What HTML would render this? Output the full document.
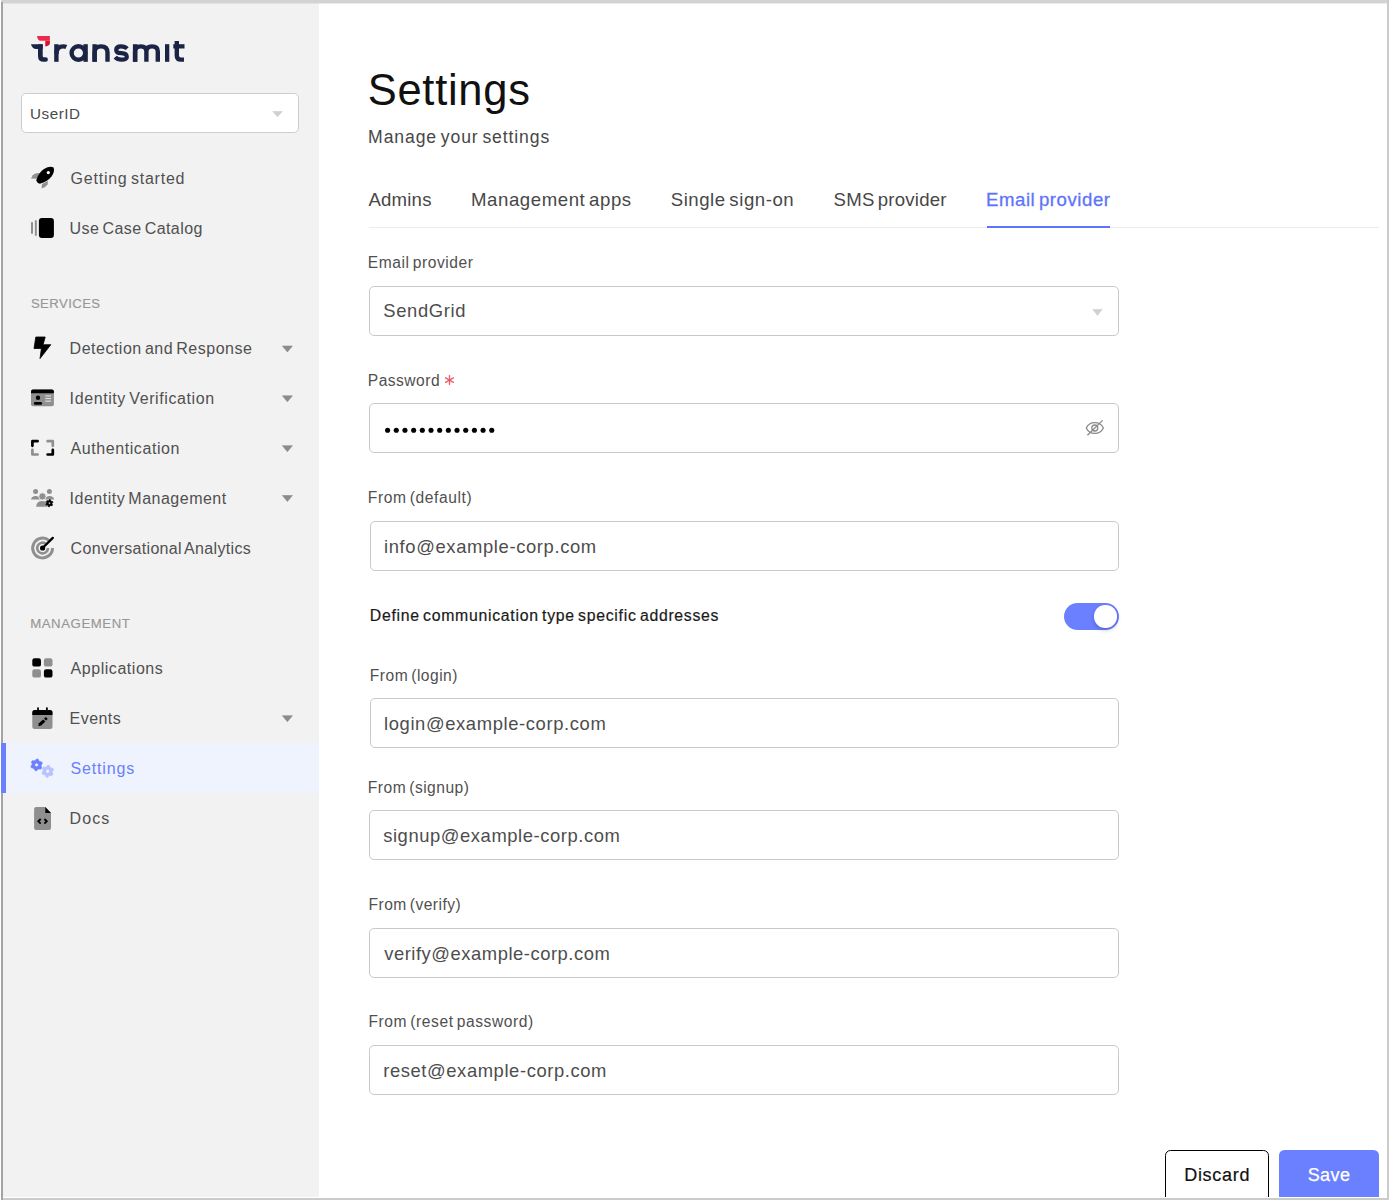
<!DOCTYPE html>
<html><head><meta charset="utf-8">
<style>
html,body{margin:0;padding:0;width:1391px;height:1204px;overflow:hidden;background:#fff;}
body{position:relative;font-family:"Liberation Sans",sans-serif;}
.t{position:absolute;white-space:nowrap;font-family:"Liberation Sans",sans-serif;}
.b{position:absolute;box-sizing:border-box;}
.fld{position:absolute;box-sizing:border-box;border:1px solid #c9c9c9;border-radius:5px;background:#fff;}
svg{position:absolute;left:0;top:0;overflow:visible;}
</style></head><body>
<!-- frame -->
<div class="b" style="left:3px;top:3px;width:316px;height:1194px;background:#f2f2f2"></div>
<div class="b" style="left:1px;top:0;width:1387px;height:3px;background:#d3d3d3"></div>
<div class="b" style="left:3px;top:3px;width:1384px;height:1px;background:rgba(200,200,200,0.35)"></div>
<div class="b" style="left:1px;top:2px;width:2px;height:1198px;background:#a4a4a4"></div>
<div class="b" style="left:1387px;top:0;width:2px;height:1200px;background:#cbcbcb"></div>
<div class="b" style="left:3px;top:1198px;width:1384px;height:2px;background:#cbcbcb"></div>
<!-- active nav -->
<div class="b" style="left:3px;top:743px;width:316px;height:50px;background:#eff3fd"></div>
<div class="b" style="left:1px;top:743px;width:5px;height:50px;background:#6b80ff"></div>
<!-- userid select -->
<div class="fld" style="left:21px;top:93px;width:278px;height:40px;border-color:#cdcdcd;border-radius:5px"></div>
<!-- tabs -->
<div class="b" style="left:369px;top:227px;width:1010px;height:1px;background:#ececec"></div>
<div class="b" style="left:987px;top:226px;width:123px;height:2px;background:#5b73ff"></div>
<!-- fields -->
<div class="fld" style="left:369px;top:286px;width:750px;height:50px"></div>
<div class="fld" style="left:369px;top:403px;width:750px;height:50px"></div>
<div class="fld" style="left:370px;top:521px;width:749px;height:50px"></div>
<div class="fld" style="left:370px;top:698px;width:749px;height:50px"></div>
<div class="fld" style="left:369px;top:810px;width:750px;height:50px"></div>
<div class="fld" style="left:369px;top:928px;width:750px;height:50px"></div>
<div class="fld" style="left:369px;top:1045px;width:750px;height:50px"></div>
<!-- toggle -->
<div class="b" style="left:1064px;top:603px;width:55px;height:27px;border-radius:14px;background:#6b80ff"></div>
<div class="b" style="left:1094px;top:605px;width:22.5px;height:22.5px;border-radius:50%;background:#fff;box-shadow:0 2px 4px rgba(0,0,40,0.22)"></div>
<!-- buttons -->
<div class="b" style="left:1165px;top:1150px;width:104px;height:60px;border:1.5px solid #000;border-radius:5.5px;background:#fff"></div>
<div class="b" style="left:1279px;top:1150px;width:100px;height:60px;border-radius:5.5px;background:#6a80ff"></div>
<!-- cover below bottom border -->
<div class="b" style="left:0;top:1200px;width:1391px;height:4px;background:#fff"></div>
<div class="b" style="left:3px;top:1198px;width:1384px;height:2px;background:#cbcbcb"></div>
<div class="b" style="left:3px;top:1197px;width:1384px;height:1px;background:#fff"></div>
<div class="t" style="left:30.10px;top:106.13px;font-size:15.20px;line-height:15.20px;letter-spacing:0.523px;word-spacing:0.00px;color:#4a4a4a;font-weight:400;">UserID</div>
<div class="t" style="left:70.60px;top:171.46px;font-size:16.00px;line-height:16.00px;letter-spacing:0.765px;word-spacing:-1.76px;color:#505050;font-weight:400;">Getting started</div>
<div class="t" style="left:69.60px;top:221.46px;font-size:16.00px;line-height:16.00px;letter-spacing:0.432px;word-spacing:-1.76px;color:#505050;font-weight:400;">Use Case Catalog</div>
<div class="t" style="left:69.60px;top:341.46px;font-size:16.00px;line-height:16.00px;letter-spacing:0.504px;word-spacing:-1.76px;color:#505050;font-weight:400;">Detection and Response</div>
<div class="t" style="left:69.60px;top:391.46px;font-size:16.00px;line-height:16.00px;letter-spacing:0.598px;word-spacing:-1.76px;color:#505050;font-weight:400;">Identity Verification</div>
<div class="t" style="left:70.60px;top:441.46px;font-size:16.00px;line-height:16.00px;letter-spacing:0.569px;word-spacing:0.00px;color:#505050;font-weight:400;">Authentication</div>
<div class="t" style="left:69.60px;top:491.46px;font-size:16.00px;line-height:16.00px;letter-spacing:0.496px;word-spacing:-1.76px;color:#505050;font-weight:400;">Identity Management</div>
<div class="t" style="left:70.60px;top:541.46px;font-size:16.00px;line-height:16.00px;letter-spacing:0.332px;word-spacing:-1.76px;color:#505050;font-weight:400;">Conversational Analytics</div>
<div class="t" style="left:70.60px;top:661.46px;font-size:16.00px;line-height:16.00px;letter-spacing:0.539px;word-spacing:0.00px;color:#505050;font-weight:400;">Applications</div>
<div class="t" style="left:69.60px;top:711.46px;font-size:16.00px;line-height:16.00px;letter-spacing:0.438px;word-spacing:0.00px;color:#505050;font-weight:400;">Events</div>
<div class="t" style="left:69.60px;top:811.46px;font-size:16.00px;line-height:16.00px;letter-spacing:1.084px;word-spacing:0.00px;color:#505050;font-weight:400;">Docs</div>
<div class="t" style="left:70.60px;top:761.46px;font-size:16.00px;line-height:16.00px;letter-spacing:0.827px;word-spacing:0.00px;color:#6a7ffb;font-weight:400;">Settings</div>
<div class="t" style="left:30.90px;top:296.83px;font-size:13.20px;line-height:13.20px;letter-spacing:0.398px;word-spacing:0.00px;color:#979797;font-weight:400;-webkit-text-stroke:0.15px #979797">SERVICES</div>
<div class="t" style="left:30.20px;top:616.83px;font-size:13.20px;line-height:13.20px;letter-spacing:0.566px;word-spacing:0.00px;color:#979797;font-weight:400;-webkit-text-stroke:0.15px #979797">MANAGEMENT</div>
<div class="t" style="left:367.70px;top:69.18px;font-size:43.50px;line-height:43.50px;letter-spacing:0.719px;word-spacing:0.00px;color:#111;font-weight:400;">Settings</div>
<div class="t" style="left:368.10px;top:129.10px;font-size:17.60px;line-height:17.60px;letter-spacing:0.884px;word-spacing:-1.94px;color:#474747;font-weight:400;">Manage your settings</div>
<div class="t" style="left:368.40px;top:191.26px;font-size:18.60px;line-height:18.60px;letter-spacing:0.214px;word-spacing:0.00px;color:#474747;font-weight:400;">Admins</div>
<div class="t" style="left:471.00px;top:191.26px;font-size:18.60px;line-height:18.60px;letter-spacing:0.584px;word-spacing:-2.05px;color:#474747;font-weight:400;">Management apps</div>
<div class="t" style="left:670.70px;top:191.26px;font-size:18.60px;line-height:18.60px;letter-spacing:0.552px;word-spacing:-2.05px;color:#474747;font-weight:400;">Single sign-on</div>
<div class="t" style="left:833.60px;top:191.26px;font-size:18.60px;line-height:18.60px;letter-spacing:0.206px;word-spacing:-2.05px;color:#474747;font-weight:400;">SMS provider</div>
<div class="t" style="left:986.00px;top:191.26px;font-size:18.60px;line-height:18.60px;letter-spacing:0.559px;word-spacing:-2.05px;color:#5d74fb;font-weight:400;-webkit-text-stroke:0.3px #5d74fb">Email provider</div>
<div class="t" style="left:367.70px;top:254.79px;font-size:15.60px;line-height:15.60px;letter-spacing:0.570px;word-spacing:-1.72px;color:#505050;font-weight:400;">Email provider</div>
<div class="t" style="left:367.80px;top:372.79px;font-size:15.60px;line-height:15.60px;letter-spacing:0.471px;word-spacing:0.00px;color:#505050;font-weight:400;">Password</div>
<div class="t" style="left:367.80px;top:489.79px;font-size:15.60px;line-height:15.60px;letter-spacing:0.590px;word-spacing:-1.72px;color:#505050;font-weight:400;">From (default)</div>
<div class="t" style="left:369.80px;top:667.79px;font-size:15.60px;line-height:15.60px;letter-spacing:0.485px;word-spacing:-1.72px;color:#505050;font-weight:400;">From (login)</div>
<div class="t" style="left:367.80px;top:779.79px;font-size:15.60px;line-height:15.60px;letter-spacing:0.485px;word-spacing:-1.72px;color:#505050;font-weight:400;">From (signup)</div>
<div class="t" style="left:368.50px;top:896.79px;font-size:15.60px;line-height:15.60px;letter-spacing:0.461px;word-spacing:-1.72px;color:#505050;font-weight:400;">From (verify)</div>
<div class="t" style="left:368.50px;top:1013.79px;font-size:15.60px;line-height:15.60px;letter-spacing:0.566px;word-spacing:-1.72px;color:#505050;font-weight:400;">From (reset password)</div>
<div class="t" style="left:383.30px;top:302.42px;font-size:18.40px;line-height:18.40px;letter-spacing:0.637px;word-spacing:0.00px;color:#4d4d4d;font-weight:400;">SendGrid</div>
<div class="t" style="left:384.00px;top:538.42px;font-size:18.40px;line-height:18.40px;letter-spacing:0.630px;word-spacing:0.00px;color:#4d4d4d;font-weight:400;">info@example-corp.com</div>
<div class="t" style="left:384.00px;top:715.42px;font-size:18.40px;line-height:18.40px;letter-spacing:0.615px;word-spacing:0.00px;color:#4d4d4d;font-weight:400;">login@example-corp.com</div>
<div class="t" style="left:383.20px;top:827.42px;font-size:18.40px;line-height:18.40px;letter-spacing:0.571px;word-spacing:0.00px;color:#4d4d4d;font-weight:400;">signup@example-corp.com</div>
<div class="t" style="left:384.20px;top:945.42px;font-size:18.40px;line-height:18.40px;letter-spacing:0.533px;word-spacing:0.00px;color:#4d4d4d;font-weight:400;">verify@example-corp.com</div>
<div class="t" style="left:383.20px;top:1062.42px;font-size:18.40px;line-height:18.40px;letter-spacing:0.590px;word-spacing:0.00px;color:#4d4d4d;font-weight:400;">reset@example-corp.com</div>
<div class="t" style="left:369.80px;top:607.63px;font-size:15.80px;line-height:15.80px;letter-spacing:0.716px;word-spacing:-1.74px;color:#1a1a1a;font-weight:400;-webkit-text-stroke:0.2px #1a1a1a">Define communication type specific addresses</div>
<div class="t" style="left:1184.20px;top:1165.76px;font-size:18.00px;line-height:18.00px;letter-spacing:0.713px;word-spacing:0.00px;color:#111;font-weight:400;-webkit-text-stroke:0.2px #111">Discard</div>
<div class="t" style="left:1307.70px;top:1165.76px;font-size:18.00px;line-height:18.00px;letter-spacing:0.393px;word-spacing:0.00px;color:#fff;font-weight:400;-webkit-text-stroke:0.25px #fff">Save</div>
<svg width="1391" height="1204" viewBox="0 0 1391 1204"><g fill="#1b2444">
<path d="M31,44.2 H42.7 V48.9 H36.2 Q32.2,48.9 31,44.2 Z"/>
<path d="M38,44.2 V56.3 Q38,61.8 43.8,61.8 H45.6 Q47.9,61.8 47.9,59.6 Q47.9,57.3 45.6,57.3 H44 Q42.7,57.3 42.7,56 V44.2 Z"/>
<rect x="54.2" y="44.2" width="4.4" height="17.6"/>
<rect x="83.4" y="44.2" width="4.4" height="17.6"/>
<rect x="92.4" y="44.2" width="4.4" height="17.6"/>
<rect x="132.9" y="44.2" width="4.4" height="17.6"/>
<rect x="165" y="44.2" width="4.3" height="17.6"/>
<rect x="173.3" y="44.2" width="11.2" height="4.3"/>
</g>
<g fill="none" stroke="#1b2444" stroke-width="4.4">
<path d="M56.4,54 Q56.4,46.4 63.5,46.4 Q65,46.4 66.3,47"/>
<circle cx="78.4" cy="53" r="6.8"/>
<path d="M94.6,61.8 V52.5 Q94.6,46.4 101,46.4 Q107.5,46.4 107.5,52.5 V61.8"/>
<path d="M135.1,61.8 V51.5 Q135.1,46.4 140.8,46.4 Q146.4,46.4 146.4,51.5 V61.8 M146.4,51.5 Q146.4,46.4 152,46.4 Q157.8,46.4 157.8,51.5 V61.8"/>
<path d="M176.8,41.1 V55.5 Q176.8,59.6 180.8,59.6 H184"/>
</g>
<path d="M127.2,48.6 Q125,46.3 121,46.3 Q116.2,46.3 116.2,49.9 Q116.2,53 121.3,53.2 Q126.8,53.4 126.8,57 Q126.8,59.7 121.3,59.7 Q117.5,59.7 115.2,57.2" fill="none" stroke="#1b2444" stroke-width="4.2"/>
<path d="M37,36.1 H49.9 V40.8 H40.6 Q37.6,40.8 37,36.1 Z" fill="#ee2a4a"/>
<path d="M45.3,40.8 H49.9 V43 Q49.9,45.8 45.3,46.4 Z" fill="#d4112f"/>

<path d="M31,178.6 Q32.5,174.6 35.2,173.6 L39.5,173 L36.5,178.8 Z" fill="#8f8f8f"/>
<path d="M41.6,188.6 Q45.6,187.2 47.6,184.4 L48,181 L42,184 Z" fill="#8f8f8f"/>
<path d="M36.2,180.6 Q38,173 44,169 Q49.5,165.8 53.6,167.4 Q55,171.8 51.5,176.4 Q47.5,181.6 39.8,183.8 Q37.2,183.2 36.2,180.6 Z" fill="#000"/>
<circle cx="48.3" cy="172.6" r="1.6" fill="#fff"/>
<rect x="38.9" y="218" width="15" height="19.9" rx="3" fill="#000"/>
<rect x="31" y="222.2" width="2" height="11.5" fill="#8f8f8f"/>
<rect x="34.9" y="220.3" width="1.9" height="15.5" fill="#8f8f8f"/>
<path d="M35.8,337 L45.2,337 L43.1,344.7 L50.8,344.7 L40,358.6 L41.4,348.5 L34,348.5 Z" fill="#000" stroke="#000" stroke-width="0.8" stroke-linejoin="round"/>
<rect x="31" y="389.4" width="22.9" height="16.9" rx="2" fill="#8f8f8f"/>
<path d="M31,393.2 V391.4 Q31,389.4 33,389.4 H51.9 Q53.9,389.4 53.9,391.4 V393.2 Z" fill="#000"/>
<circle cx="38" cy="397.7" r="2.2" fill="#000"/>
<rect x="33.9" y="402" width="8.2" height="2.7" rx="1.3" fill="#000"/>
<rect x="45.2" y="395.4" width="5.9" height="1.1" fill="#fff" opacity="0.75"/>
<rect x="45.2" y="398" width="5.9" height="1.1" fill="#fff" opacity="0.75"/>
<rect x="45.2" y="400.6" width="5.9" height="1.1" fill="#fff" opacity="0.75"/>
<g fill="none" stroke-width="2.7" stroke-linecap="round" stroke-linejoin="round">
<path d="M32.4,445.8 V441.2 H37.6" stroke="#000"/>
<path d="M47.6,441.2 H52.8 V445.8" stroke="#8f8f8f"/>
<path d="M32.4,449.8 V454.5 H37.6" stroke="#8f8f8f"/>
<path d="M47.6,454.5 H52.8 V449.8" stroke="#000"/>
</g>
<circle cx="35.6" cy="491.5" r="2.5" fill="#8f8f8f"/>
<path d="M31,499.6 Q31.6,496 35.6,496 Q39.6,496 40.2,499.6 Z" fill="#8f8f8f"/>
<circle cx="49.4" cy="491.5" r="2.5" fill="#8f8f8f"/>
<path d="M45,499.6 Q45.6,496 49.6,496 Q53.6,496 54.2,499.6 Z" fill="#8f8f8f"/>
<circle cx="42.4" cy="496.4" r="3.6" fill="#8f8f8f" stroke="#f2f2f2" stroke-width="0.8"/>
<path d="M36.2,506.8 Q36.2,501 42.4,501 Q46.2,501 47.6,503 V506.8 Z" fill="#8f8f8f"/>
<path d="M49.40,499.60 L50.33,499.72 L50.70,500.95 L51.24,501.36 L52.52,501.40 L52.88,502.27 L52.00,503.20 L51.91,503.87 L52.52,505.00 L51.95,505.75 L50.70,505.45 L50.07,505.71 L49.40,506.80 L48.47,506.68 L48.10,505.45 L47.56,505.04 L46.28,505.00 L45.92,504.13 L46.80,503.20 L46.89,502.53 L46.28,501.40 L46.85,500.65 L48.10,500.95 L48.73,500.69 Z M50.50,503.20 A1.1,1.1 0 1 0 48.30,503.20 A1.1,1.1 0 1 0 50.50,503.20 Z" fill="#000" fill-rule="evenodd" stroke="#000" stroke-width="0.8" stroke-linejoin="round"/>
<g fill="none" stroke="#8f8f8f">
<path d="M52.50,548.00 A9.9,9.9 0 1 1 49.22,540.64" stroke-width="3"/>
<path d="M48.00,548.00 A5.4,5.4 0 1 1 46.21,543.99" stroke-width="2.6"/>
</g>
<line x1="42.6" y1="548" x2="52.8" y2="537.9" stroke="#000" stroke-width="2.3" stroke-linecap="round"/>
<circle cx="42.6" cy="548" r="2.6" fill="#000"/>
<rect x="32.3" y="658.2" width="8.7" height="8.4" rx="2.2" fill="#000"/>
<rect x="43.9" y="658.2" width="8.6" height="8.4" rx="2.2" fill="#8f8f8f"/>
<rect x="32.3" y="669.2" width="8.7" height="8.4" rx="2.2" fill="#8f8f8f"/>
<rect x="43.9" y="669.2" width="8.6" height="8.4" rx="2.2" fill="#000"/>
<rect x="32.3" y="710" width="20.2" height="18.9" rx="2.5" fill="#8f8f8f"/>
<path d="M32.3,715 V712.5 Q32.3,710 34.8,710 H50 Q52.5,710 52.5,712.5 V715 Z" fill="#000"/>
<rect x="37.1" y="707.3" width="1.8" height="4" rx="0.8" fill="#000"/>
<rect x="46" y="707.3" width="1.8" height="4" rx="0.8" fill="#000"/>
<path d="M38.3,726.2 L38.9,723.2 L43.2,719.4 L45.4,721.6 L41.2,725.5 Z" fill="#000"/><path d="M44,718.6 L45.2,717.5 Q45.8,717 46.5,717.5 L47.3,718.3 Q47.8,719 47.2,719.6 L46.1,720.6 Z" fill="#000"/>
<path d="M36.60,759.00 L38.13,759.20 L38.90,760.92 L39.85,761.65 L41.71,761.95 L42.30,763.37 L41.20,764.90 L41.04,766.09 L41.71,767.85 L40.77,769.07 L38.90,768.88 L37.79,769.34 L36.60,770.80 L35.07,770.60 L34.30,768.88 L33.35,768.15 L31.49,767.85 L30.90,766.43 L32.00,764.90 L32.16,763.71 L31.49,761.95 L32.43,760.73 L34.30,760.92 L35.41,760.46 Z M38.50,764.90 A1.9,1.9 0 1 0 34.70,764.90 A1.9,1.9 0 1 0 38.50,764.90 Z" fill="#6b80ff" fill-rule="evenodd" stroke="#6b80ff" stroke-width="0.8" stroke-linejoin="round"/>
<path d="M47.70,765.30 L49.25,765.50 L50.05,767.23 L51.02,767.98 L52.90,768.30 L53.50,769.75 L52.40,771.30 L52.24,772.52 L52.90,774.30 L51.94,775.54 L50.05,775.37 L48.92,775.84 L47.70,777.30 L46.15,777.10 L45.35,775.37 L44.38,774.62 L42.50,774.30 L41.90,772.85 L43.00,771.30 L43.16,770.08 L42.50,768.30 L43.46,767.06 L45.35,767.23 L46.48,766.76 Z M49.70,771.30 A2.0,2.0 0 1 0 45.70,771.30 A2.0,2.0 0 1 0 49.70,771.30 Z" fill="#b8c3fb" fill-rule="evenodd" stroke="#b8c3fb" stroke-width="0.8" stroke-linejoin="round"/>
<path d="M34.1,809 Q34.1,807 36.1,807 H45.3 L51,812.9 V827.9 Q51,829.9 49,829.9 H36.1 Q34.1,829.9 34.1,827.9 Z" fill="#8f8f8f"/>
<path d="M45.3,807 L51,812.9 H45.3 Z" fill="#000"/>
<g fill="none" stroke="#000" stroke-width="1.8" stroke-linecap="butt" stroke-linejoin="miter">
<path d="M40.7,819 L38.3,821.3 L40.7,823.6"/>
<path d="M44.4,819 L46.8,821.3 L44.4,823.6"/>
</g>
<path d="M282.4,346.0 H292.4 L287.4,352.0 Z" fill="#8c8c8c" stroke="#8c8c8c" stroke-width="0.6" stroke-linejoin="round"/>
<path d="M282.4,395.8 H292.4 L287.4,401.8 Z" fill="#8c8c8c" stroke="#8c8c8c" stroke-width="0.6" stroke-linejoin="round"/>
<path d="M282.4,445.7 H292.4 L287.4,451.7 Z" fill="#8c8c8c" stroke="#8c8c8c" stroke-width="0.6" stroke-linejoin="round"/>
<path d="M282.4,495.5 H292.4 L287.4,501.5 Z" fill="#8c8c8c" stroke="#8c8c8c" stroke-width="0.6" stroke-linejoin="round"/>
<path d="M282.4,715.7 H292.4 L287.4,721.7 Z" fill="#8c8c8c" stroke="#8c8c8c" stroke-width="0.6" stroke-linejoin="round"/>
<path d="M272.8,111.5 H282.3 L277.55,116.8 Z" fill="#cfcfcf" stroke="#cfcfcf" stroke-width="0.6" stroke-linejoin="round"/>
<path d="M1092.8,309.4 H1102.2 L1097.5,315.4 Z" fill="#d0d0d0" stroke="#d0d0d0" stroke-width="0.6" stroke-linejoin="round"/>
<g fill="none" stroke="#8a8a8a" stroke-width="1.3">
<path d="M1086.3,428 C1089.5,420.8 1100,420.8 1103.4,428 C1100,435.2 1089.5,435.2 1086.3,428 Z"/>
<circle cx="1094.8" cy="428" r="3"/>
<line x1="1087.4" y1="435.2" x2="1102.6" y2="420.4"/>
</g>
<g stroke="#ee5a68" stroke-width="1.3" stroke-linecap="round"><line x1="449.5" y1="375.6" x2="449.5" y2="384.6"/><line x1="445.6" y1="377.85" x2="453.4" y2="382.35"/><line x1="445.6" y1="382.35" x2="453.4" y2="377.85"/></g>
<circle cx="387.60" cy="430.3" r="2.55" fill="#000"/>
<circle cx="396.28" cy="430.3" r="2.55" fill="#000"/>
<circle cx="404.96" cy="430.3" r="2.55" fill="#000"/>
<circle cx="413.64" cy="430.3" r="2.55" fill="#000"/>
<circle cx="422.32" cy="430.3" r="2.55" fill="#000"/>
<circle cx="431.00" cy="430.3" r="2.55" fill="#000"/>
<circle cx="439.68" cy="430.3" r="2.55" fill="#000"/>
<circle cx="448.36" cy="430.3" r="2.55" fill="#000"/>
<circle cx="457.04" cy="430.3" r="2.55" fill="#000"/>
<circle cx="465.72" cy="430.3" r="2.55" fill="#000"/>
<circle cx="474.40" cy="430.3" r="2.55" fill="#000"/>
<circle cx="483.08" cy="430.3" r="2.55" fill="#000"/>
<circle cx="491.76" cy="430.3" r="2.55" fill="#000"/></svg>
</body></html>
